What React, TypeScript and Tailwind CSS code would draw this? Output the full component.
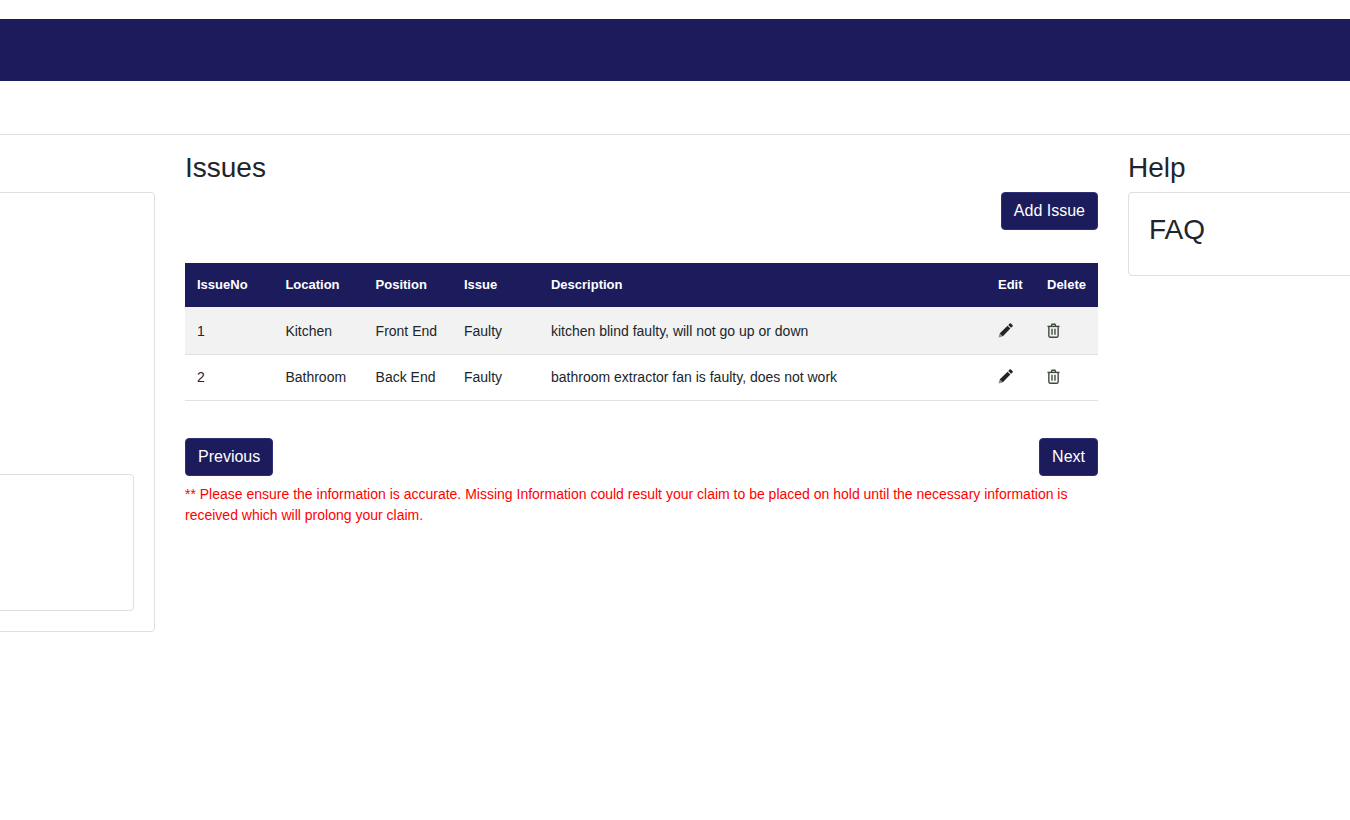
import React from "react";

const font = { fontFamily: '"Liberation Sans", Arial, sans-serif' };

function Pencil() {
  return (
    <svg viewBox="0 0 16 16" className="w-[15px] h-[15px]">
      <path fill="#212529" d="M12.4.6a1 1 0 0 1 1.4 0l1.6 1.6a1 1 0 0 1 0 1.4l-1.5 1.5-3-3z" />
      <path fill="#212529" d="M10.2 2.8l3 3-8 8.2-1.5-.3-.3-1.2-1.2-.3-.3-1.4z" />
      <path fill="#8a8a8a" d="M1.7 11.2l3.1 3.1-4.2 1.1z" />
    </svg>
  );
}

function Trash() {
  return (
    <svg viewBox="0 0 14 16" className="w-[13px] h-[15px]" fill="none" stroke="#3f4a3c" strokeWidth="1.5">
      <path d="M.5 3.6h13" />
      <path d="M4.6 3.3l.8-2h3.2l.8 2" />
      <path d="M2 3.6v10.1c0 .9.5 1.5 1.2 1.5h7.6c.7 0 1.2-.6 1.2-1.5V3.6" />
      <path d="M5.4 6.2v6.4M8.6 6.2v6.4" />
    </svg>
  );
}

const rows = [
  { no: "1", location: "Kitchen", position: "Front End", issue: "Faulty", description: "kitchen blind faulty, will not go up or down" },
  { no: "2", location: "Bathroom", position: "Back End", issue: "Faulty", description: "bathroom extractor fan is faulty, does not work" },
];

const btn = "h-[38px] px-3 rounded border border-[#2f2f75] bg-[#1c1c5c] text-white text-base";

export default function App() {
  return (
    <div className="w-[1350px] h-[820px] overflow-hidden bg-white text-[#212529]" style={font}>
      <div className="h-[19px]" />
      <div className="h-[62px] bg-[#1c1c5c]" />
      <div className="h-[54px] border-b border-[#dee2e6]" />
      <div className="flex gap-[30px] pt-4 -ml-[245px]">
        <div className="w-[400px] shrink-0 pt-[41px]">
          <div className="h-[440px] rounded border border-[#dfdfdf] p-5 flex flex-col justify-end">
            <div className="h-[137px] rounded-sm border border-[#dfdfdf]" />
          </div>
        </div>

        <div className="w-[913px] shrink-0">
          <h2 className="text-[28px] leading-[33.6px] mb-[7.4px]">Issues</h2>
          <div className="flex justify-end">
            <button className={btn}>Add Issue</button>
          </div>
          <table className="mt-[33px] w-full table-fixed border-collapse text-sm">
            <thead>
              <tr className="h-[44px] bg-[#1c1c5c] text-white text-left text-[13px] font-bold">
                <th className="w-[88.4px] px-3">IssueNo</th>
                <th className="w-[90.2px] px-3">Location</th>
                <th className="w-[88.4px] px-3">Position</th>
                <th className="w-[87px] px-3">Issue</th>
                <th className="px-3">Description</th>
                <th className="w-[49px] px-3">Edit</th>
                <th className="w-[63px] px-3">Delete</th>
              </tr>
            </thead>
            <tbody>
              {rows.map((r, i) => (
                <tr key={r.no} className={`border-b border-[#dee2e6] ${i === 0 ? "h-[47.5px] bg-[#f2f2f2]" : "h-[46px]"}`}>
                  <td className={`px-3 ${i === 0 ? "pt-[2px]" : ""}`}>{r.no}</td>
                  <td className={`px-3 ${i === 0 ? "pt-[2px]" : ""}`}>{r.location}</td>
                  <td className={`px-3 ${i === 0 ? "pt-[2px]" : ""}`}>{r.position}</td>
                  <td className={`px-3 ${i === 0 ? "pt-[2px]" : ""}`}>{r.issue}</td>
                  <td className={`px-3 ${i === 0 ? "pt-[2px]" : ""}`}>{r.description}</td>
                  <td className={`px-3 ${i === 1 ? "pb-[2px]" : ""}`}><Pencil /></td>
                  <td className={`px-3 ${i === 1 ? "pb-[2px]" : ""}`}><Trash /></td>
                </tr>
              ))}
            </tbody>
          </table>
          <div className="mt-[37px] flex justify-between">
            <button className={btn}>Previous</button>
            <button className={btn}>Next</button>
          </div>
          <p className="mt-2 text-sm leading-[21px] text-[#ff0000]">
            ** Please ensure the information is accurate. Missing Information could result your claim to be placed on hold until the necessary information is received which will prolong your claim.
          </p>
        </div>

        <div className="w-[400px] shrink-0">
          <h2 className="text-[28px] leading-[33.6px] mb-[7.4px]">Help</h2>
          <div className="h-[84px] rounded border border-[#dfdfdf] p-5">
            <h3 className="text-[28px] leading-[33.6px]">FAQ</h3>
          </div>
        </div>
      </div>
    </div>
  );
}
